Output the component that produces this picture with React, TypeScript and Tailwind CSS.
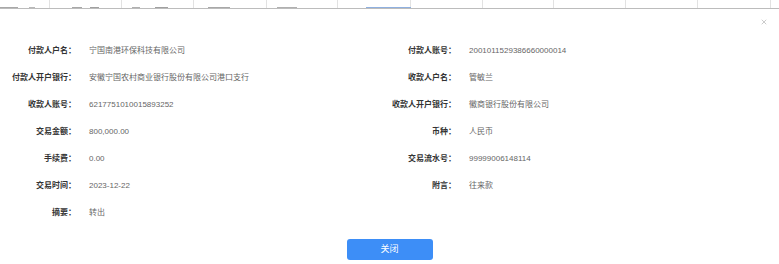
import { X } from "lucide-react";

// bits of the table row that peek out above the dialog
const HEAD_CELLS = [
  { w: "w-[50px]", bits: [[0, 18, "#a8a8a8"], [29, 6, "#b8b8b8"]] },
  { w: "w-[72px]", bits: [[22, 10, "#a8a8a8"], [40, 9, "#a0a0a0"]] },
  { w: "w-[72px]", bits: [[10, 8, "#b0b0b0"], [33, 13, "#a0a0a0"]] },
  { w: "w-[73px]", bits: [[14, 22, "#a8a8a8"]] },
  { w: "w-[71px]", bits: [[10, 20, "#b0b0b0"]] },
  { w: "w-[73px]", bits: [[28, 45, "#8fb0e0"]] },
  { w: "w-[72px]", bits: [] },
  { w: "w-[71px]", bits: [] },
  { w: "w-[72px]", bits: [] },
  { w: "w-[72px]", bits: [] },
  { w: "w-[73px]", bits: [] },
] as { w: string; bits: [number, number, string][] }[];

const ROWS: [string, string, string | null, string | null][] = [
  ["付款人户名：", "宁国南港环保科技有限公司", "付款人账号：", "2001011529386660000014"],
  ["付款人开户银行：", "安徽宁国农村商业银行股份有限公司港口支行", "收款人户名：", "管敏兰"],
  ["收款人账号：", "6217751010015893252", "收款人开户银行：", "徽商银行股份有限公司"],
  ["交易金额：", "800,000.00", "币种：", "人民币"],
  ["手续费：", "0.00", "交易流水号：", "99999006148114"],
  ["交易时间：", "2023-12-22", "附言：", "往来款"],
  ["摘要：", "转出", null, null],
];

function Field({ label, value }: { label: string | null; value: string | null }) {
  if (!label) return <div className="h-[27px]" />;
  return (
    <div className="flex h-[27px] items-center">
      <span className="w-[76px] shrink-0 text-right font-bold text-[#333]">{label}</span>
      <span className="ml-[13px] whitespace-nowrap text-[#666]">{value}</span>
    </div>
  );
}

export default function App() {
  return (
    <div
      className="relative h-[264px] w-[779px] overflow-hidden bg-white text-[8px] leading-none"
      style={{ fontFamily: '"Liberation Sans", "Noto Sans CJK SC", sans-serif' }}
    >
      {/* table row behind the dialog */}
      <div className="flex h-[9px] border-b border-[#bcbcbc]">
        {HEAD_CELLS.map((c, i) => (
          <div key={i} className={`${c.w} relative shrink-0 border-r border-[#e2e2e2]`}>
            {c.bits.map(([x, w, color], j) => (
              <div
                key={j}
                className="absolute bottom-0 h-[1px]"
                style={{ left: x, width: w, backgroundColor: color }}
              />
            ))}
          </div>
        ))}
      </div>

      <button type="button" className="absolute right-[11px] top-[18px] text-[#b0b0b0]" aria-label="close">
        <X className="h-[8px] w-[8px]" strokeWidth={2} />
      </button>

      {/* details */}
      <div className="mt-[28px] grid grid-cols-[380px_1fr]">
        {ROWS.map(([l1, v1, l2, v2], i) => (
          <div key={i} className="contents">
            <Field label={l1} value={v1} />
            <Field label={l2} value={v2} />
          </div>
        ))}
      </div>

      <div className="mt-[13px] flex justify-center">
        <button
          type="button"
          className="h-[21px] w-[86px] rounded-[3px] bg-[#3d8ef7] text-[9px] text-white"
        >
          关闭
        </button>
      </div>
    </div>
  );
}
